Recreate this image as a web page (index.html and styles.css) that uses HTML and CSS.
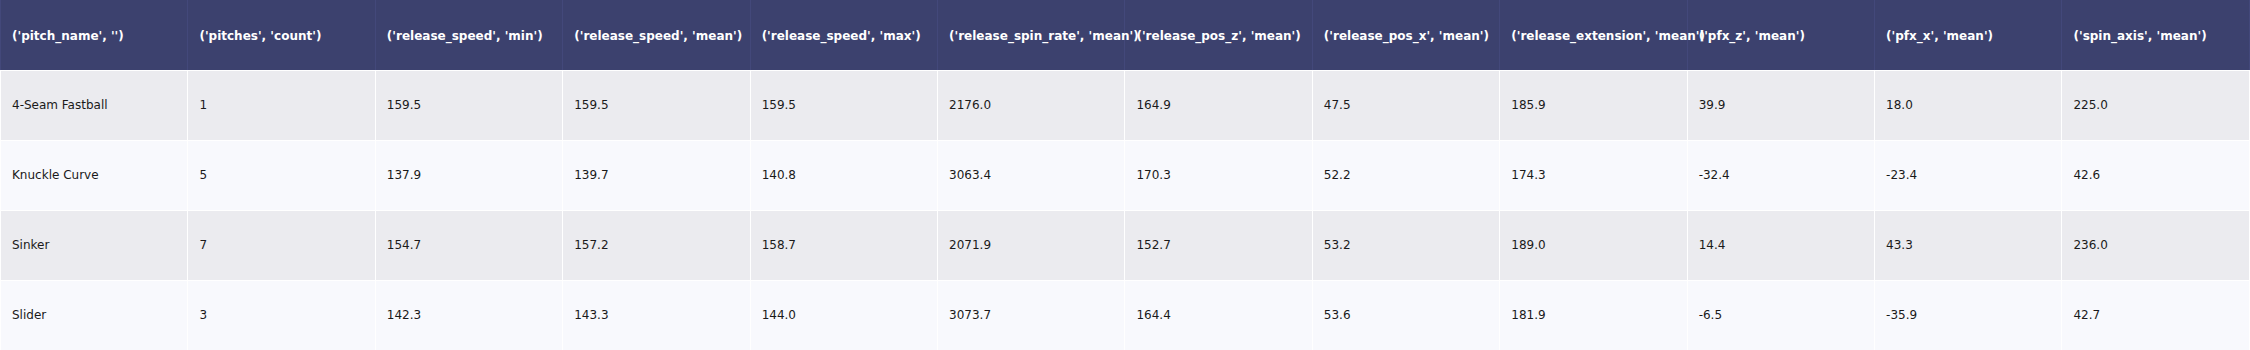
FILE: index.html
```html
<!DOCTYPE html>
<html lang="en">
<head>
  <meta charset="UTF-8">
  <title>Pitch summary</title>
  <link rel="stylesheet" href="styles.css">
</head>
<body>
  <table class="pitch-table">
    <thead>
      <tr>
        <th>('pitch_name', '')</th>
        <th>('pitches', 'count')</th>
        <th>('release_speed', 'min')</th>
        <th>('release_speed', 'mean')</th>
        <th>('release_speed', 'max')</th>
        <th>('release_spin_rate', 'mean')</th>
        <th>('release_pos_z', 'mean')</th>
        <th>('release_pos_x', 'mean')</th>
        <th>('release_extension', 'mean')</th>
        <th>('pfx_z', 'mean')</th>
        <th>('pfx_x', 'mean')</th>
        <th>('spin_axis', 'mean')</th>
      </tr>
    </thead>
    <tbody>
      <tr>
        <td>4-Seam Fastball</td><td>1</td><td>159.5</td><td>159.5</td><td>159.5</td><td>2176.0</td>
        <td>164.9</td><td>47.5</td><td>185.9</td><td>39.9</td><td>18.0</td><td>225.0</td>
      </tr>
      <tr>
        <td>Knuckle Curve</td><td>5</td><td>137.9</td><td>139.7</td><td>140.8</td><td>3063.4</td>
        <td>170.3</td><td>52.2</td><td>174.3</td><td>-32.4</td><td>-23.4</td><td>42.6</td>
      </tr>
      <tr>
        <td>Sinker</td><td>7</td><td>154.7</td><td>157.2</td><td>158.7</td><td>2071.9</td>
        <td>152.7</td><td>53.2</td><td>189.0</td><td>14.4</td><td>43.3</td><td>236.0</td>
      </tr>
      <tr>
        <td>Slider</td><td>3</td><td>142.3</td><td>143.3</td><td>144.0</td><td>3073.7</td>
        <td>164.4</td><td>53.6</td><td>181.9</td><td>-6.5</td><td>-35.9</td><td>42.7</td>
      </tr>
    </tbody>
  </table>
</body>
</html>
```

FILE: styles.css
```css
* {
  margin: 0;
  padding: 0;
  box-sizing: border-box;
}
body {
  font-family: 'DejaVu Sans', Verdana, sans-serif;
  font-size: 12px;
  background: #f8f9fd;
}
.pitch-table {
  width: 2250px;
  table-layout: fixed;
  border-collapse: collapse;
}
.pitch-table th,
.pitch-table td {
  height: 70px;
  padding: 0 11px;
  text-align: left;
  vertical-align: middle;
  white-space: nowrap;
  border: 1px solid #ffffff;
}
.pitch-table th {
  padding-top: 2px;
  background: #3c416e;
  color: #ffffff;
  font-weight: bold;
  border-color: #43487a;
  border-top: none;
  border-bottom-color: #ffffff;
}
.pitch-table td {
  color: #1a1a1a;
}
.pitch-table tbody tr:nth-child(odd) td {
  background: #ebebef;
}
.pitch-table tbody tr:nth-child(even) td {
  background: #f8f9fd;
}
```
